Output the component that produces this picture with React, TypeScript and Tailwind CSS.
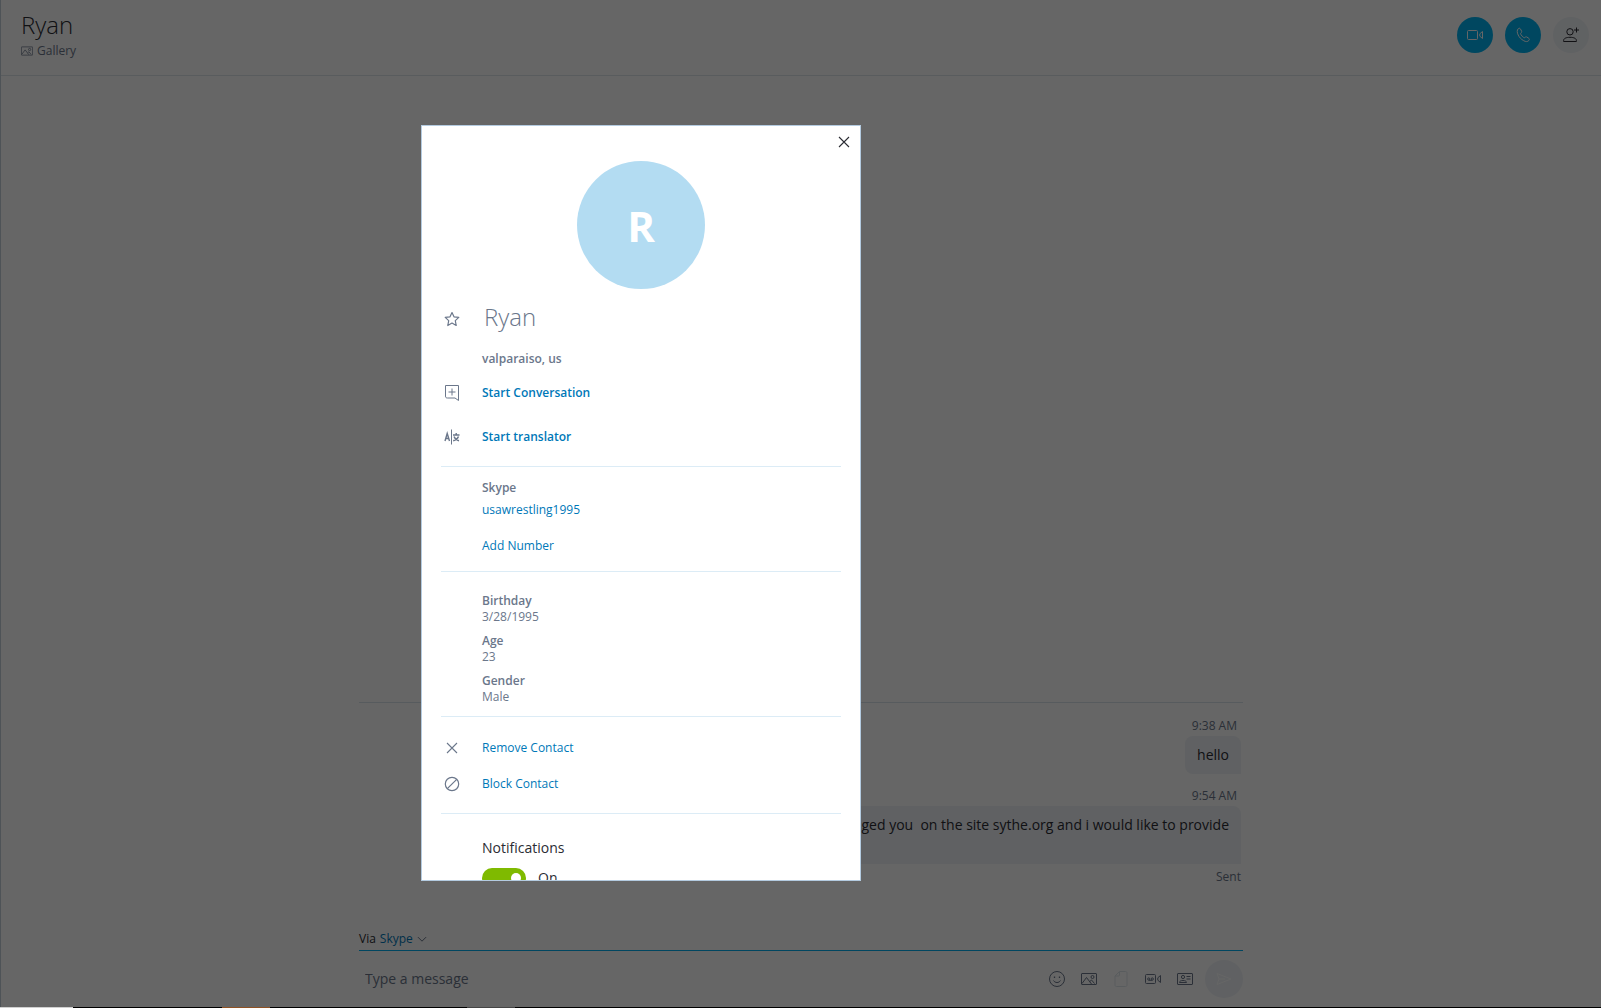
import React from 'react';
import { clsx } from 'clsx';

const Svg = ({ size = 16, className, children }: any) => (
  <svg
    width={size}
    height={size}
    viewBox="0 0 16 16"
    fill="none"
    stroke="currentColor"
    strokeWidth="1"
    className={clsx("shrink-0", className)}
    aria-hidden="true"
  >
    {children}
  </svg>
);

const GalleryIcon = (props: any) => (
  <Svg {...props}>
    <rect x="0.5" y="2.5" width="15" height="11" rx="0.5" />
    <path d="M1 12.5 5.5 6.5 10.5 13M8.8 10.5 10.5 9 13.5 12.5" />
    <circle cx="11.5" cy="6" r="1.5" />
  </Svg>
);

const VideoIcon = (props: any) => (
  <Svg {...props}>
    <rect x="0.5" y="3.5" width="10" height="9" rx="1" />
    <path d="M15.5 4.5v7L12.8 9.2V6.8z" />
  </Svg>
);

const PhoneIcon = (props: any) => (
  <Svg {...props}>
    <path d="M3.2 1.8c1-.9 1.7-.7 2.3.3l1 1.9c.4.8.2 1.3-.7 2.1-.4.4-.3.8.2 1.6.8 1.3 1.6 2.1 2.6 2.7.7.4 1.1.4 1.6-.1.6-.6 1.1-.6 1.8-.2l1.6 1.1c.9.6 1 1.3.3 2.2-1.2 1.5-3.1 1.500-5.200.3C5.900 12.100 4.300 10.300 3.200 8 2 5.500 1.800 3.200 3.200 1.800z" />
  </Svg>
);

const AddPersonIcon = (props: any) => (
  <Svg {...props}>
    <circle cx="7" cy="4.8" r="3.2" />
    <path d="M.6 14.5v-1c0-2 2.5-3.2 6.4-3.2s6.4 1.2 6.4 3.2v1z" />
    <path d="M13.5.5v5M11 3h5" />
  </Svg>
);

const StarIcon = (props: any) => (
  <Svg {...props}>
    <path d="M8 1.5 10 5.8l4.8.6-3.5 3.2.9 4.9L8 12.1l-4.2 2.4.9-4.9L1.2 6.4 6 5.8z" strokeWidth="1.2" strokeLinejoin="round" />
  </Svg>
);

const NewChatIcon = (props: any) => (
  <Svg {...props}>
    <path d="M1.5.5h13v15l-3.5-2.500H3.500c-1.500 0-2-.5-2-2z" strokeLinejoin="round" />
    <path d="M8 3.5v7M4.5 7h7" />
  </Svg>
);

const TranslateIcon = (props: any) => (
  <Svg {...props}>
    <path d="M7.5.5v15" />
    <path d="M1 12 3.2 4.5 5.500 12M1.700 9.500h3" strokeWidth="1.4" />
    <path d="M9 6h6.500M12.200 4v2M10 7.500c.8 2 2.500 3.700 5 4.300M14.500 7.500c-.8 2-2.500 3.700-5.300 4.300" strokeWidth="1.4" />
  </Svg>
);

const CrossIcon = (props: any) => (
  <Svg {...props}>
    <path d="m3 3 10 10M13 3 3 13" strokeWidth="1.1" />
  </Svg>
);

const BlockIcon = (props: any) => (
  <Svg {...props}>
    <circle cx="8" cy="8" r="6.700" strokeWidth="1.2" />
    <path d="M12.700 3.300 3.300 12.700" strokeWidth="1.2" />
  </Svg>
);

const SmileIcon = (props: any) => (
  <Svg {...props}>
    <circle cx="8" cy="8" r="7.5" />
    <path d="M4.5 9.5c1.5 2.7 5.5 2.7 7 0" />
    <path d="M5.5 5.5v1.5M10.5 5.5v1.5" strokeWidth="1.3" />
  </Svg>
);

const FileIcon = (props: any) => (
  <Svg {...props}>
    <path d="M6.5.5h6c1 0 1.5.5 1.5 1.5v12c0 1-.5 1.5-1.5 1.5h-9c-1 0-1.5-.5-1.5-1.5V5z" />
    <path d="M6.5.5V4c0 .7-.3 1-1 1H2" />
  </Svg>
);

const VideoMessageIcon = (props: any) => (
  <Svg {...props}>
    <rect x="0.5" y="3.5" width="10" height="9" rx="1" />
    <path d="M15.5 4.5v7L12.8 9.2V6.8z" />
    <circle cx="3.7" cy="8" r="1.1" />
    <circle cx="7.3" cy="8" r="1.1" />
    <path d="M3.7 9.3h3.6" />
  </Svg>
);

const ContactCardIcon = (props: any) => (
  <Svg {...props}>
    <rect x="0.5" y="2.5" width="15" height="11" rx="0.5" />
    <circle cx="6" cy="6" r="1.6" />
    <path d="M2.5 11.5c0-1.4 1.4-2 3.5-2s3.5.6 3.5 2zM9.500 5.500h4M9.500 8h4" />
  </Svg>
);

const SendIcon = (props: any) => (
  <Svg {...props}>
    <path d="M1 2.5 15 8 1 13.5 3 8zM3 8h6" />
  </Svg>
);

const Row = ({ icon, className, children }: any) => (
  <div className={clsx("flex items-center", className)}>
    <span className="flex w-[41px] shrink-0 justify-start pl-[3px] text-[#6b778b]">{icon}</span>
    {children}
  </div>
);

const LinkButton = ({ bold, children }: any) => (
  <button type="button" className={clsx("text-left text-[#0078b8]", bold && "font-semibold")}>
    {children}
  </button>
);

const Field = ({ label, value }: any) => (
  <div className="mb-2">
    <dt className="font-semibold">{label}</dt>
    <dd>{value}</dd>
  </div>
);

const Rule = () => <hr className="border-t border-[#dcecf6]" />;

const RoundButton = ({ label, className, children }: any) => (
  <button
    type="button"
    aria-label={label}
    className={clsx("flex size-9 items-center justify-center rounded-full", className)}
  >
    {children}
  </button>
);

const Header = () => (
  <header className="flex h-[76px] shrink-0 items-start justify-between border-b border-[#dfe5ea] pr-3 pl-5">
    <div className="pt-[9px]">
      <h1 className="text-2xl leading-8 font-light text-[#2b2c33]">Ryan</h1>
      <button type="button" className="flex items-center gap-1 text-xs leading-5 text-[#6b778b]">
        <GalleryIcon size={12} />
        Gallery
      </button>
    </div>
    <div className="flex gap-3 pt-[17px]">
      <RoundButton label="Video call" className="bg-[#00b2f0] text-white">
        <VideoIcon />
      </RoundButton>
      <RoundButton label="Audio call" className="bg-[#00b2f0] text-white">
        <PhoneIcon />
      </RoundButton>
      <RoundButton label="Add to group" className="bg-[#f1f4f8] text-[#2b2c33]">
        <AddPersonIcon />
      </RoundButton>
    </div>
  </header>
);

const Messages = () => (
  <section className="mx-auto flex w-full max-w-[884px] flex-1 flex-col justify-end pb-[43px]">
    <div className="flex flex-col items-end border-t border-[#d9e4ea] pt-[13px] pr-0.5">
      <time className="pr-1 text-xs leading-5 text-[#6b778b]">9:38 AM</time>
      <p className="rounded-lg rounded-br-none bg-[#f0f3f7] px-3 py-[9px] text-sm leading-5 text-[#2b2c33]">hello</p>
      <time className="mt-3 pr-1 text-xs leading-5 text-[#6b778b]">9:54 AM</time>
      <p className="min-h-[58px] rounded-lg rounded-br-none bg-[#f0f3f7] px-3 py-[9px] text-sm leading-5 whitespace-pre text-[#2b2c33]">
        {"messaged you  on the site sythe.org and i would like to provide"}
      </p>
      <span className="pt-[3px] text-xs leading-5 text-[#6b778b]">Sent</span>
    </div>
  </section>
);

const tools = [
  { label: "Emoticons", Icon: SmileIcon },
  { label: "Add image", Icon: GalleryIcon },
  { label: "Add file", Icon: FileIcon, faded: true },
  { label: "Video message", Icon: VideoMessageIcon },
  { label: "Share contact", Icon: ContactCardIcon },
];

const Composer = () => (
  <footer className="mx-auto w-full max-w-[884px] shrink-0 pb-[9px]">
    <div className="flex h-[18px] items-center gap-1 text-xs text-[#2b2c33]">
      <span>Via</span>
      <button type="button" className="flex items-center gap-1 text-[#0078b8]">
        Skype
        <Svg size={10} className="text-[#6b778b]">
          <path d="m1.5 5 6.5 6.5L14.5 5" strokeWidth="1.6" />
        </Svg>
      </button>
    </div>
    <div className="mt-0.5 flex items-center border-t border-[#00aff0] pt-[9px]">
      <input
        type="text"
        aria-label="Message"
        placeholder="Type a message"
        className="min-w-0 flex-1 bg-transparent pl-1.5 text-sm outline-none placeholder:text-[#6b778b]"
      />
      <div className="flex items-center gap-4">
        {tools.map(({ label, Icon, faded }) => (
          <button key={label} type="button" aria-label={label} className={faded ? "text-[#dfe7ec]" : "text-[#6b778b]"}>
            <Icon />
          </button>
        ))}
      </div>
      <button type="button" aria-label="Send" className="ml-3 flex size-[38px] items-center justify-center rounded-full bg-[#f0f3f7] text-white">
        <SendIcon />
      </button>
    </div>
  </footer>
);

const ProfileDialog = () => (
  <div
    role="dialog"
    aria-label="Profile"
    className="relative h-[75vh] w-[440px] overflow-hidden border border-[#b4cbe0] bg-white px-[19px] text-xs leading-4 text-[#6b778b]"
  >
    <button type="button" aria-label="Close" className="absolute top-2 right-2 text-[#2b2c33]">
      <CrossIcon />
    </button>

    <div className="mx-auto mt-[35px] flex size-32 items-center justify-center rounded-full bg-[#b3dcf2] pt-0.5 text-[42px] font-bold text-white">
      R
    </div>

    <Row icon={<StarIcon />} className="mt-3 h-9">
      <h2 className="pb-1 pl-0.5 text-2xl font-light">Ryan</h2>
    </Row>
    <p className="mt-[14px] pl-[41px] font-semibold">valparaiso, us</p>
    <Row icon={<NewChatIcon />} className="mt-[18px]">
      <LinkButton bold>Start Conversation</LinkButton>
    </Row>
    <Row icon={<TranslateIcon />} className="mt-7 mb-[21px]">
      <LinkButton bold>Start translator</LinkButton>
    </Row>
    <Rule />

    <div className="flex flex-col items-start py-[13px] pl-[41px]">
      <p className="font-semibold">Skype</p>
      <a href="#skype" className="mt-1.5 text-[#0078b8]">usawrestling1995</a>
      <div className="mt-5 mb-1">
        <LinkButton>Add Number</LinkButton>
      </div>
    </div>
    <Rule />

    <dl className="pt-[21px] pb-[3px] pl-[41px]">
      <Field label="Birthday" value="3/28/1995" />
      <Field label="Age" value="23" />
      <Field label="Gender" value="Male" />
    </dl>
    <Rule />

    <Row icon={<CrossIcon />} className="mt-[23px]">
      <LinkButton>Remove Contact</LinkButton>
    </Row>
    <Row icon={<BlockIcon />} className="mt-5 mb-[21px]">
      <LinkButton>Block Contact</LinkButton>
    </Row>
    <Rule />

    <div className="pt-6 pl-[41px] text-sm text-[#2b2c33]">
      <p className="leading-5">Notifications</p>
      <label className="mt-2.5 flex items-center gap-3 leading-5">
        <input type="checkbox" defaultChecked className="peer sr-only" />
        <span className="flex h-5 w-11 items-center justify-end rounded-full bg-[#7fba00] px-[5px]">
          <span className="size-2.5 rounded-full bg-white" />
        </span>
        On
      </label>
    </div>
  </div>
);

const Taskbar = () => (
  <div className="flex h-px shrink-0 bg-black">
    <div className="w-[73px] bg-[#d0d0d0]" />
    <div className="ml-[149px] w-12 bg-[#8f5224]" />
    <div className="ml-[197px] w-12 bg-[#444444]" />
  </div>
);

export default function App() {
  return (
    <div className="flex h-screen flex-col overflow-hidden font-['Open_Sans','Noto_Sans',sans-serif]">
      <div className="relative flex min-h-0 flex-1 flex-col border-l border-[#c4cfda] bg-white">
        <Header />
        <Messages />
        <Composer />
        <div className="absolute inset-0 -left-px flex items-center justify-center bg-black/60 pr-[319px] pb-px">
          <ProfileDialog />
        </div>
      </div>
      <Taskbar />
    </div>
  );
}
